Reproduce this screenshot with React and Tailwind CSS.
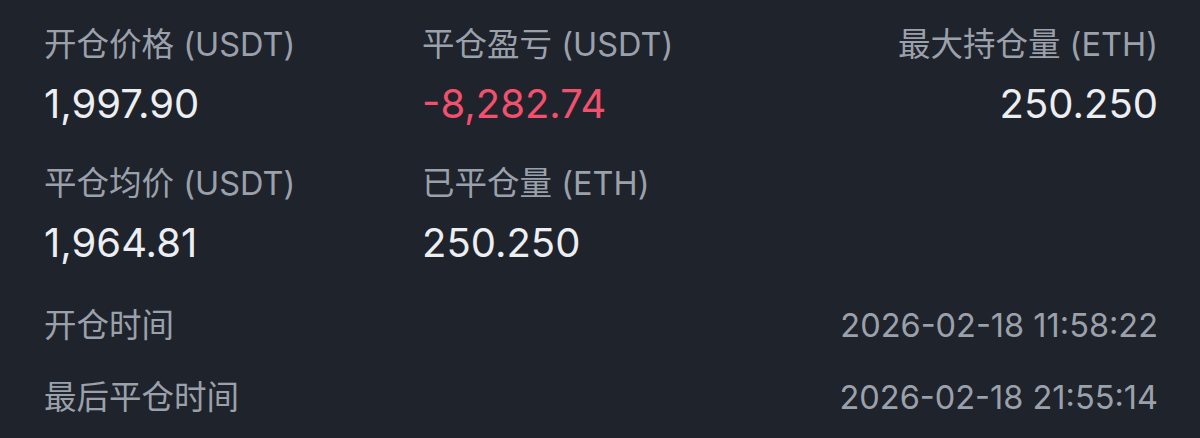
import React from 'react';

const label = "text-[32.5px] leading-[40px] text-[#9ba1aa]";
const value = "text-[40px] leading-[44px] text-[#eceef1]";

function Cell({ title, amount, right, red }) {
  return (
    <div className={right ? "flex flex-col items-end" : "flex flex-col"}>
      <div className={label}>{title}</div>
      <div className={`${value} mt-[17px] ${red ? "text-[#f2506c]" : ""}`}>{amount}</div>
    </div>
  );
}

export default function App() {
  const rows = [
    { title: '开仓时间', time: '2026-02-18 11:58:22' },
    { title: '最后平仓时间', time: '2026-02-18 21:55:14' },
  ];

  return (
    <div
      className="w-[1200px] h-[438px] bg-[#1f232c] pl-[44px] pr-[42px] pt-[25px] overflow-hidden"
      style={{ fontFamily: 'Inter, "Noto Sans CJK SC", sans-serif' }}
    >
      <div className="grid grid-cols-[378px_1fr_1fr] gap-y-[38px]">
        <Cell title="开仓价格 (USDT)" amount="1,997.90" />
        <Cell title="平仓盈亏 (USDT)" amount="-8,282.74" red />
        <Cell title="最大持仓量 (ETH)" amount="250.250" right />
        <Cell title="平仓均价 (USDT)" amount="1,964.81" />
        <Cell title="已平仓量 (ETH)" amount="250.250" />
        <div />
      </div>
      <div className="flex flex-col gap-[32px] mt-[41px]">
        {rows.map((r) => (
          <div key={r.title} className="flex justify-between items-center">
            <span className={label}>{r.title}</span>
            <span className={label}>{r.time}</span>
          </div>
        ))}
      </div>
    </div>
  );
}
